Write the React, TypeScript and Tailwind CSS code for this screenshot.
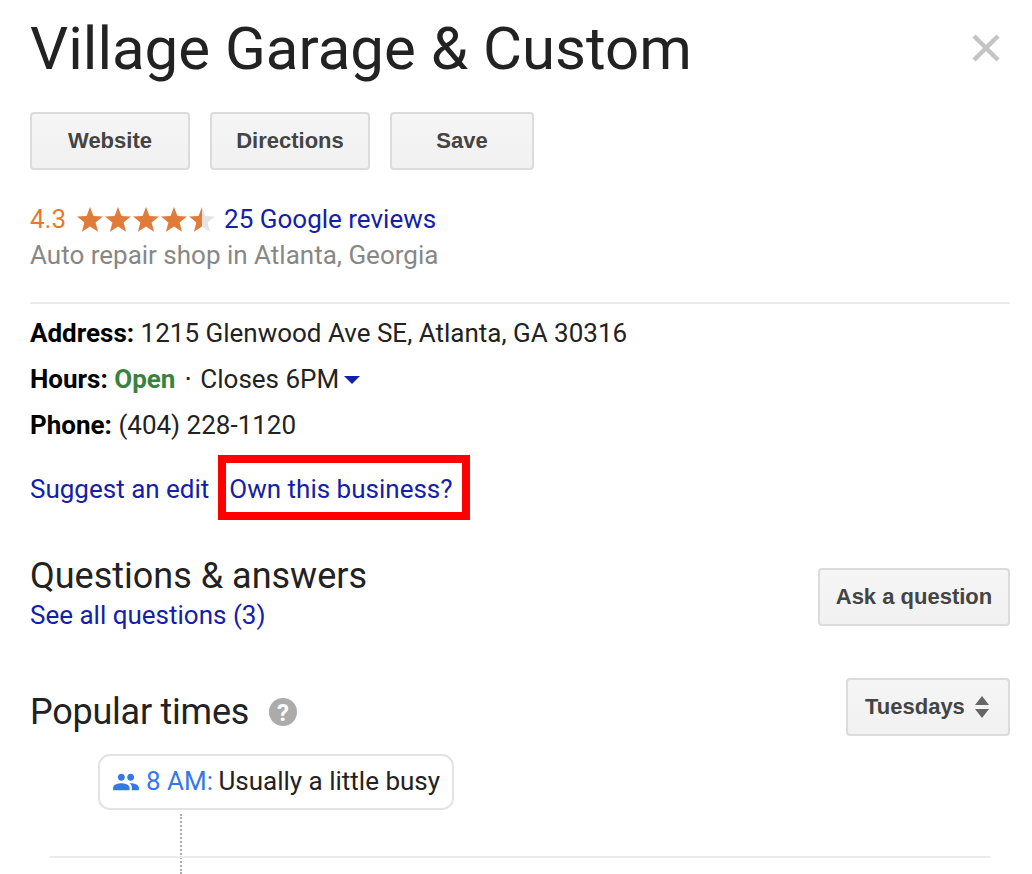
import React from "react";

const roboto = "font-['Roboto',sans-serif]";
const btn =
  "flex items-center justify-center h-[58px] pb-[2px] rounded-[4px] border-2 border-[#dcdcdc] bg-gradient-to-b from-[#f5f5f5] to-[#f1f1f1] font-['Liberation_Sans',sans-serif] font-bold text-[22px] text-[#444444]";

function Star({ fill }: { fill: number }) {
  const id = `s${fill}`;
  const d = "M13 1l3.2 8.2 8.8.5-6.8 5.6 2.3 8.6L13 19.100l-7.500 4.800 2.300-8.600L1 9.700l8.800-.5z";
  return (
    <svg width="28" height="27" viewBox="0 0 26 25">
      <defs>
        <linearGradient id={id}>
          <stop offset={fill} stopColor="#e07b39" />
          <stop offset={fill} stopColor="#e4e4e4" />
        </linearGradient>
      </defs>
      <path d={d} fill={`url(#${id})`} />
    </svg>
  );
}

export default function App() {
  return (
    <div className={`w-[1032px] h-[874px] overflow-hidden bg-white pl-[30px] pr-[22px] ${roboto} text-[26px] text-[#222222]`}>
      <div className="flex items-start justify-between h-[112px]">
        <h1 className="text-[60px] leading-[60px] mt-[19px] text-[#222222] font-normal">Village Garage &amp; Custom</h1>
        <svg width="30" height="30" viewBox="0 0 30 30" className="mt-[33px] mr-[9px]">
          <path d="M3 3L27 27M27 3L3 27" stroke="#c4c4c4" strokeWidth="4.500" />
        </svg>
      </div>

      <div className="flex gap-5">
        <div className={`${btn} w-[160px]`}>Website</div>
        <div className={`${btn} w-[160px]`}>Directions</div>
        <div className={`${btn} w-[144px]`}>Save</div>
      </div>

      <div className="flex items-center h-[36px] mt-[31px] leading-[36px]">
        <span className="text-[#e07b39]">4.3</span>
        <span className="flex items-center ml-[10px] mr-[8px]">
          <Star fill={1} />
          <Star fill={1} />
          <Star fill={1} />
          <Star fill={1} />
          <Star fill={0.5} />
        </span>
        <a className="text-[#1420a8]">25 Google reviews</a>
      </div>
      <div className="h-[36px] leading-[36px] text-[#878787]">Auto repair shop in Atlanta, Georgia</div>

      <div className="h-[2px] bg-[#ebebeb] mt-[29px]" />

      <div className="mt-[11px] h-[36px] leading-[36px]">
        <b className="font-bold text-black">Address:</b> 1215 Glenwood Ave SE, Atlanta, GA 30316
      </div>
      <div className="mt-[10px] h-[36px] leading-[36px] flex items-center whitespace-pre">
        <b className="font-bold text-black">Hours: </b>
        <b className="font-bold text-[#3b8240]">Open</b>
        <span className="ml-[2px]"> ⋅ </span>
        <span className="ml-[2px]">Closes 6PM</span>
        <svg width="16" height="8" viewBox="0 0 16 8" className="ml-[5px] mt-[1px]">
          <path d="M0 0h16L8 8z" fill="#1420a8" />
        </svg>
      </div>
      <div className="mt-[10px] h-[36px] leading-[36px]">
        <b className="font-bold text-black">Phone:</b> (404) 228-1120
      </div>

      <div className="mt-[28px] h-[36px] leading-[36px] flex text-[#1420a8] whitespace-pre">
        <a>Suggest an edit</a>
        <span className="text-[#777777] ml-[8px]">⋅</span>
        <a className="relative ml-[4px]">
          Own this business?
          <span className="absolute -left-[11px] -right-[17px] -top-[16px] h-[65px] border-[8px] border-[#ff0000]" />
        </a>
      </div>

      <div className="flex items-start justify-between mt-[48px]">
        <div className="mt-[1px]">
          <div className="text-[36px] leading-[40px]">Questions &amp; answers</div>
          <a className="block text-[#1420a8] leading-[36px] mt-[1px]">See all questions (3)</a>
        </div>
        <div className={`${btn} w-[192px] mt-[13px]`}>Ask a question</div>
      </div>

      <div className="flex items-start justify-between mt-[45px]">
        <div className="flex items-center mt-[14px]">
          <span className="text-[36px] leading-[40px] tracking-[-0.25px]">Popular times</span>
          <svg width="28" height="28" viewBox="0 0 28 28" className="ml-[20px]">
            <circle cx="14" cy="14" r="14" fill="#ababab" />
            <text x="14" y="23" textAnchor="middle" fontSize="24" fontWeight="700" fill="#ffffff" fontFamily="Roboto, sans-serif">?</text>
          </svg>
        </div>
        <div className={`${btn} w-[164px] !justify-start pl-[17px] gap-[10px]`}>
          Tuesdays
          <svg width="14" height="22" viewBox="0 0 14 22" className="mt-[2px]">
            <path d="M7 0l7 9H0z M0 13h14l-7 9z" fill="#666666" />
          </svg>
        </div>
      </div>

      <div className="relative ml-[68px] mt-[18px] w-[356px] h-[56px] rounded-[12px] border-2 border-[#e3e3e3] bg-white flex items-center pl-[13px] pb-[1px] whitespace-pre">
        <svg width="28" height="28" viewBox="0 0 24 24" className="mr-[6px] -ml-[1px]">
          <path
            fill="#3578e5"
            d="M16 11c1.660 0 2.990-1.340 2.990-3S17.660 5 16 5s-3 1.340-3 3 1.340 3 3 3zm-8 0c1.660 0 2.990-1.340 2.990-3S9.660 5 8 5 5 6.340 5 8s1.340 3 3 3zm0 2c-2.330 0-7 1.170-7 3.500V19h14v-2.500c0-2.330-4.670-3.500-7-3.500zm8 0c-.29 0-.62.020-.97.050 1.160.84 1.970 1.970 1.970 3.450V19h6v-2.500c0-2.330-4.670-3.500-7-3.500z"
          />
        </svg>
        <span className="text-[#3578e5]">8 AM: </span>
        <span className="text-[#222222] -ml-[1px]">Usually a little busy</span>
      </div>

      <div className="ml-[150px] mt-[4px] h-[60px] w-0 border-l-2 border-dotted border-[#ababab]" />
      <div className="-mt-[18px] ml-[20px] mr-[20px] h-[2px] bg-[#ebebeb]" />
    </div>
  );
}
